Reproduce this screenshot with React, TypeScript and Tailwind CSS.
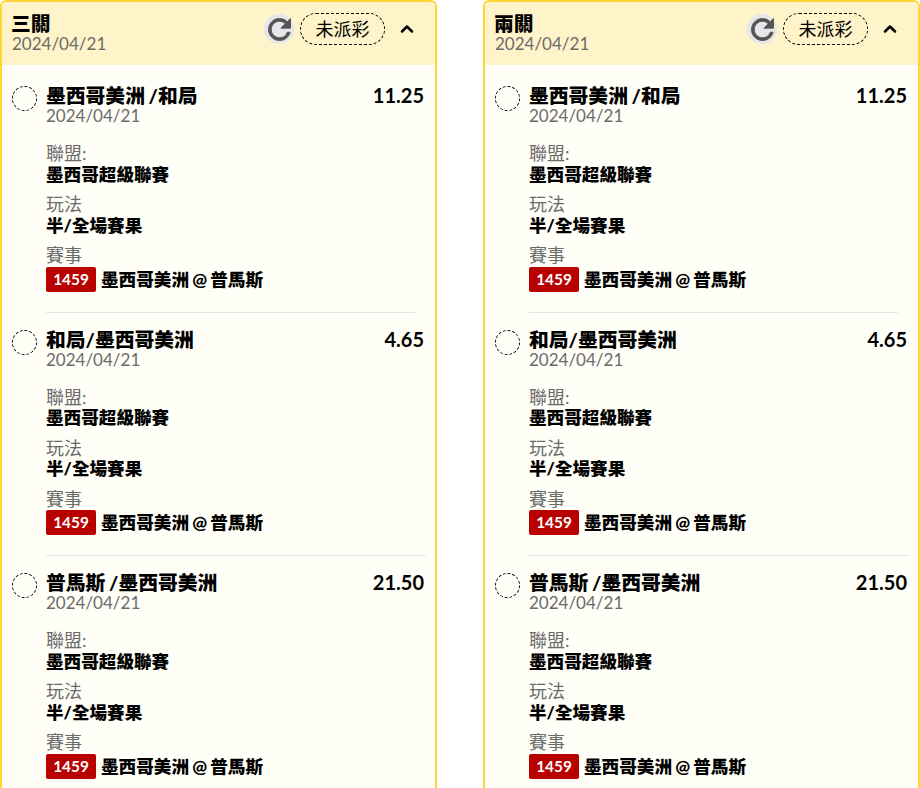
import { ChevronUp } from "lucide-react";

const FONT = "font-['Lato','Noto_Sans_CJK_TC',sans-serif]";

const bets = [
  { title: "墨西哥美洲 /和局", odds: "11.25", divider: "w-[369px]" },
  { title: "和局/墨西哥美洲", odds: "4.65", divider: "w-[380px]" },
  { title: "普馬斯 /墨西哥美洲", odds: "21.50", divider: "" },
];

type Bet = (typeof bets)[number];

function RefreshIcon() {
  return (
    <svg viewBox="0 0 24 24" className="h-[33px] w-[33px] shrink-0 text-[#555]" fill="currentColor" stroke="currentColor" strokeWidth={0.7}>
      <path d="M17.65 6.35A7.958 7.958 0 0 0 12 4c-4.42 0-7.99 3.58-7.99 8s3.57 8 7.99 8c3.73 0 6.84-2.55 7.73-6h-2.08A5.99 5.99 0 0 1 12 18c-3.31 0-6-2.69-6-6s2.69-6 6-6c1.66 0 3.14.69 4.22 1.78L13 11h7V4l-2.35 2.35z" />
    </svg>
  );
}

function Label({ text }: { text: string }) {
  return <div className="mb-[2.5px] text-[18px] leading-[18px] text-[#6b6b6b]">{text}</div>;
}

function Field({ label, value }: { label: string; value: string }) {
  return (
    <div className="mb-[10.5px]">
      <Label text={label} />
      <div className="text-[17.6px] leading-[20px] font-black text-black [word-spacing:-1px]">{value}</div>
    </div>
  );
}

function BetRow({ title, odds, divider }: Bet) {
  return (
    <div className="h-[243.4px]">
      <div className="flex items-start">
        <div className="mt-[2px] h-[25px] w-[25px] shrink-0 rounded-full border border-dashed border-black" />
        <div className="ml-[9px] min-w-0 flex-1">
          <div className="mb-[2px] flex items-start justify-between pr-[1px]">
            <div className="text-[19.8px] leading-[22px] font-black text-black [word-spacing:-1px]">{title}</div>
            <div className="text-[20px] leading-[22px] font-bold text-black">{odds}</div>
          </div>
          <div className="text-[17px] leading-[16px] text-[#6b6b6b]">2024/04/21</div>
          <div className="mt-[20px]">
            <Field label="聯盟:" value="墨西哥超級聯賽" />
            <Field label="玩法" value="半/全場賽果" />
            <Label text="賽事" />
            <div className="mt-[2px] flex items-center">
              <span className="flex h-[25px] w-[50px] items-center justify-center rounded-[2px] bg-[#b80000] text-[15.4px] font-bold text-white">
                1459
              </span>
              <span className="ml-[5px] text-[17.6px] leading-[25px] font-black text-black [word-spacing:-1px]">
                墨西哥美洲 @ 普馬斯
              </span>
            </div>
            {divider !== "" && <div className={`mt-[20px] h-px bg-[#e5e5e0] ${divider}`} />}
          </div>
        </div>
      </div>
    </div>
  );
}

function Card({ name }: { name: string }) {
  return (
    <div className="h-[800px] w-[437px] shrink-0 overflow-hidden rounded-t-[6px] border-2 border-[#fdd835] bg-[#fffef7]">
      <div className="flex h-[63px] items-start justify-between bg-[#fff3c9] pl-[10px] pr-[18px]">
        <div className="pt-[9px]">
          <div className="-ml-px text-[19.8px] leading-[24px] font-black text-black">{name}</div>
          <div className="mt-[1px] text-[17px] leading-[16px] text-[#6b6b6b]">2024/04/21</div>
        </div>
        <div className="flex items-center pt-[11px]">
          <div className="flex h-[30px] w-[30px] items-center justify-center rounded-full bg-[#e5e7eb]">
            <RefreshIcon />
          </div>
          <div className="ml-[6px] flex h-[32px] w-[85px] items-center justify-center rounded-full border border-dashed border-black text-[18px] text-black">
            未派彩
          </div>
          <ChevronUp className="ml-[12px] h-[20px] w-[20px] text-black" strokeWidth={3} />
        </div>
      </div>
      <div className="pl-[10px] pr-[10px] pt-[19.3px]">
        {bets.map((bet) => (
          <BetRow key={bet.title} {...bet} />
        ))}
      </div>
    </div>
  );
}

export default function App() {
  return (
    <div className={`flex h-[788px] w-[920px] justify-between overflow-hidden bg-white ${FONT}`}>
      <Card name="三關" />
      <Card name="兩關" />
    </div>
  );
}
